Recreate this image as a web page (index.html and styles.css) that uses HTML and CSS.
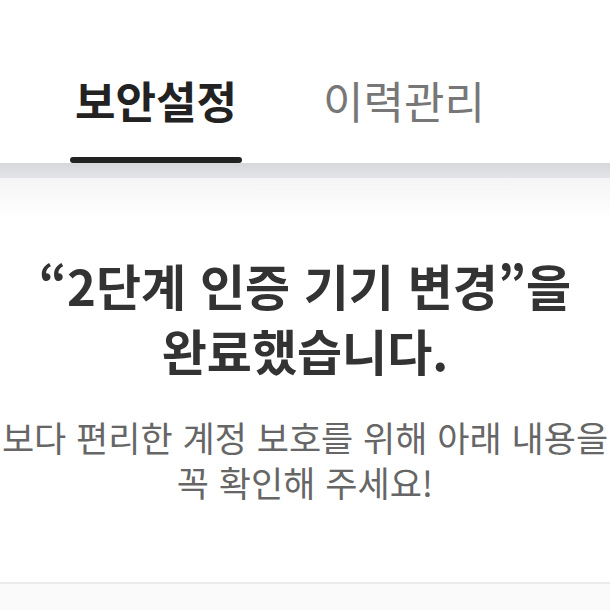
FILE: index.html
```html
<!DOCTYPE html>
<html lang="ko">
<head>
    <meta charset="UTF-8">
    <meta name="viewport" content="width=device-width, initial-scale=1.0">
    <title>보안설정</title>
    <link rel="stylesheet" href="styles.css">
</head>
<body>

    <nav class="tab-bar">
        <a href="#" class="tab-item is-active">보안설정</a>
        <a href="#" class="tab-item">이력관리</a>
    </nav>
    <div class="tab-divider"></div>

    <main class="result">
        <h1 class="result-title">
            <span class="line">“2단계 인증 기기 변경”을</span>
            <span class="line">완료했습니다.</span>
        </h1>
        <p class="result-desc">
            <span class="line">보다 편리한 계정 보호를 위해 아래 내용을</span>
            <span class="line">꼭 확인해 주세요!</span>
        </p>
    </main>

    <section class="next-section"></section>

</body>
</html>
```

FILE: styles.css
```css
/* 기본 */
body {
    font-family: "Noto Sans CJK KR", "Noto Sans", sans-serif;
    margin: 0;
    background-color: #fff;
    color: #333;
}
a {
    text-decoration: none;
    color: inherit;
}

/* 상단 탭 */
.tab-bar {
    display: flex;
    gap: 76px;
    padding: 70px 0 0 70px;
    background-color: #fff;
}
.tab-item {
    width: 172px;
    text-align: center;
    font-size: 44px;
    line-height: 60px;
    padding-bottom: 33px;
    color: #777;
    position: relative;
}
.tab-item.is-active {
    color: #222;
    font-weight: 700;
}
.tab-item.is-active::after {
    content: "";
    position: absolute;
    left: 0;
    right: 0;
    bottom: 0;
    height: 6px;
    border-radius: 3px;
    background-color: #222;
}
.tab-divider {
    height: 15px;
    background: linear-gradient(#d7d8db, #e3e4e7);
}

/* 완료 안내 */
.result {
    text-align: center;
    padding: 74px 0 78px;
    background: linear-gradient(#f4f4f5 0, #fff 40px);
}
.line {
    display: block;
    white-space: nowrap;
}
.result-title {
    margin: 0 0 32px;
    font-size: 49px;
    line-height: 65px;
    font-weight: 700;
    color: #333;
}
.result-desc {
    margin: 0;
    font-size: 35px;
    line-height: 45px;
    color: #666;
}

.next-section {
    border-top: 2px solid #ebebeb;
    background-color: #fafafa;
    height: 40px;
}
```
